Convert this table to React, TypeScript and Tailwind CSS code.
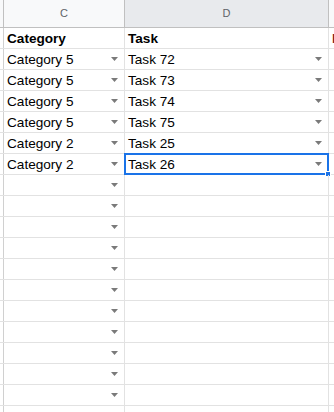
import React from 'react';

type Row = { category: string; task: string; header?: boolean };

const rows: Row[] = [
  { category: 'Category', task: 'Task', header: true },
  { category: 'Category 5', task: 'Task 72' },
  { category: 'Category 5', task: 'Task 73' },
  { category: 'Category 5', task: 'Task 74' },
  { category: 'Category 5', task: 'Task 75' },
  { category: 'Category 2', task: 'Task 25' },
  { category: 'Category 2', task: 'Task 26' },
];

const EMPTY_ROWS = 12;

const Arrow = () => (
  <svg width="7" height="4" viewBox="0 0 7 4" className="shrink-0">
    <path d="M0 0 H7 L3.5 4 Z" fill="#7a7a7a" />
  </svg>
);

export default function App() {
  const allRows: (Row | null)[] = [...rows, ...Array.from({ length: EMPTY_ROWS }, () => null)];

  return (
    <div className="w-[334px] h-[412px] overflow-hidden bg-white font-['Liberation_Sans',Arial,sans-serif] text-[13.6px] text-black">
      {/* Column headers */}
      <div className="flex h-[28px] border-b border-[#c0c0c0] bg-[#f8f9fa] text-[11px] text-[#5f6368]">
        <div className="w-[4px] shrink-0 border-r border-[#c0c0c0]" />
        <div className="w-[121px] shrink-0 border-r border-[#c0c0c0] flex items-center justify-center">C</div>
        <div className="w-[204px] shrink-0 border-r border-[#c0c0c0] bg-[#e8eaed] flex items-center justify-center">D</div>
        <div className="flex-1" />
      </div>

      {allRows.map((row, i) => {
        const selected = row?.task === 'Task 26';
        return (
          <div key={i} className="flex h-[21px] border-b border-[#e2e2e2]">
            <div className="w-[4px] shrink-0 border-r border-[#d0d0d0]" />
            <div className="w-[121px] shrink-0 border-r border-[#e2e2e2] flex items-center justify-between pl-[3px] pr-[6px]">
              <span className={`pt-[2px] leading-none ${row?.header ? 'font-bold' : ''}`}>{row?.category ?? ''}</span>
              {!row?.header && <Arrow />}
            </div>
            <div className="relative w-[204px] shrink-0 border-r border-[#e2e2e2] flex items-center justify-between pl-[3px] pr-[6px]">
              <span className={`pt-[2px] leading-none ${row?.header ? 'font-bold' : ''}`}>{row?.task ?? ''}</span>
              {row && !row.header && <Arrow />}
              {selected && (
                <>
                  <div className="absolute -top-[1px] -left-[1px] -right-[1px] -bottom-[1px] border-2 border-[#1a73e8] pointer-events-none" />
                  <div className="absolute -right-[3px] -bottom-[3px] w-[6px] h-[6px] bg-[#1a73e8] border border-white" />
                </>
              )}
            </div>
            <div className="flex-1 overflow-hidden pl-[3px] flex items-center">
              {row?.header && <span className="pt-[2px] leading-none font-bold text-[#7f1d1d] whitespace-nowrap">Notes</span>}
            </div>
          </div>
        );
      })}
    </div>
  );
}
